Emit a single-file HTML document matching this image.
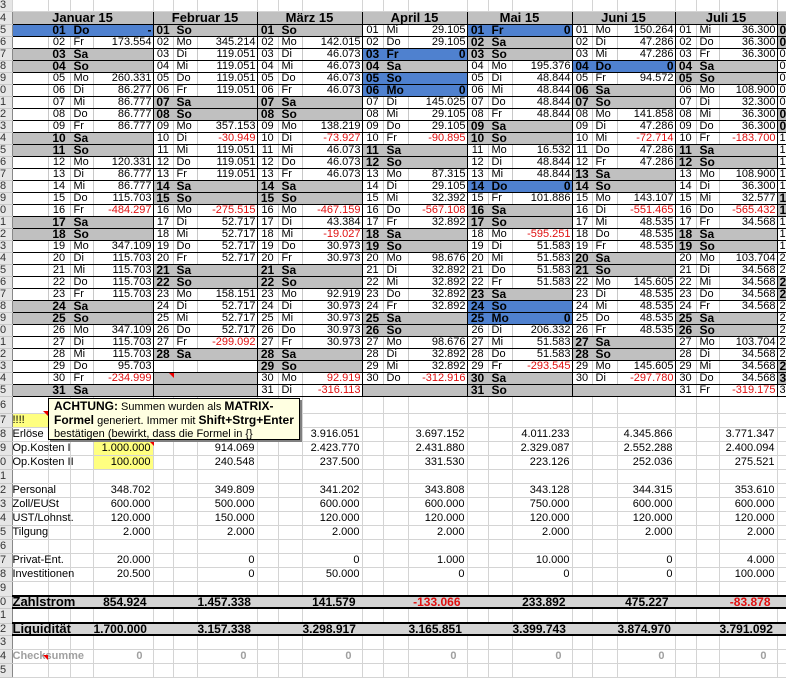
<!DOCTYPE html>
<html><head><meta charset="utf-8">
<style>
body{margin:0;width:786px;height:677px;overflow:hidden;background:#fff;font-family:"Liberation Sans",Arial,sans-serif;position:relative}
table{border-collapse:collapse;table-layout:fixed;width:786px;position:absolute;left:0;top:0}
td,th{padding:0;overflow:visible;white-space:nowrap;font-size:11px;color:#000}
th{background:#e6e6e6;font-weight:normal;text-align:left;color:#333;border-right:1px solid #888;border-bottom:1px solid #c8c8c8;font-size:11px;overflow:hidden}
tr.t td,tr.t th{height:11px;line-height:11px;border-right:1px solid #d4d4d4;border-bottom:1px solid #d4d4d4}
tr.h td,tr.h th{height:12px;line-height:12px}
tr.h td{background:#c0c0c0;border:1px solid #000;text-align:center;font-weight:bold;font-size:13px}
tr.u td,tr.u th{height:11px;line-height:11px}
tr.u td{border-bottom:1px solid #000;border-right:1px solid #c8c8c8}
tr.u td:nth-child(3n+3){text-align:center}
tr.u td:nth-child(3n+4){padding-left:3px}
tr.u td:nth-child(2){border-left:1px solid #000}
tr.u td.g{background:#c0c0c0;font-weight:bold;font-size:12px;border-right-color:#c0c0c0}
tr.u td.b{background:#4f81cf;font-weight:bold;font-size:12px;border-right-color:#4f81cf}
tr.u td:nth-child(3n+5){text-align:right;padding-right:1px;border-right:1px solid #000}
tr.u td:last-child{text-align:left;padding:0 0 0 2px;border-right:none}
.r{color:#e01010!important}
tr.l td,tr.l th{height:13px;line-height:13px}
tr.l.f td,tr.l.f th{height:16px}
tr.l td{border-right:1px solid #d4d4d4;border-bottom:1px solid #d4d4d4}
tr.l td.v{text-align:right;padding-right:2px}
tr.l td.y{background:#ffff80}
tr.z td,tr.z th{height:10px;line-height:10px}
tr.z td{background:#d4d4d4;border-top:2px solid #000;border-bottom:2px solid #000;font-weight:bold;font-size:12px}
tr.z td.v{text-align:right;padding-right:6px}
tr.c td{color:#a0a0a0;font-weight:bold}
tr.c td.v{padding-right:10px}
#tip{position:absolute;left:48px;top:398px;width:252px;height:42px;background:#ffffe1;border:1px solid #000;box-shadow:2px 2px 0 #808080;font-size:11px;line-height:13px;padding:1px 0 0 5px;box-sizing:border-box;overflow:hidden}
#tip b{font-size:12px}
.tri{position:absolute;width:0;height:0;border-top:5px solid #e00;border-left:5px solid transparent}
</style></head><body>
<table>
<colgroup><col style="width:12px"><col style="width:36px">
<col style="width:22px"><col style="width:23px"><col style="width:60px">
<col style="width:20px"><col style="width:24px"><col style="width:60px">
<col style="width:21px"><col style="width:24px"><col style="width:60px">
<col style="width:21px"><col style="width:25px"><col style="width:59px">
<col style="width:21px"><col style="width:24px"><col style="width:60px">
<col style="width:20px"><col style="width:25px"><col style="width:58px">
<col style="width:21px"><col style="width:23px"><col style="width:58px">
<col style="width:9px"></colgroup>
<tr class="t"><th>3</th><td></td><td></td><td></td><td></td><td></td><td></td><td></td><td></td><td></td><td></td><td></td><td></td><td></td><td></td><td></td><td></td><td></td><td></td><td></td><td></td><td></td><td></td><td></td></tr>
<tr class="h"><th>4</th><td colspan="4">Januar 15</td><td colspan="3">Februar 15</td><td colspan="3">März 15</td><td colspan="3">April 15</td><td colspan="3">Mai 15</td><td colspan="3">Juni 15</td><td colspan="3">Juli 15</td><td></td></tr>
<tr class="u"><th>5</th><td class="b"></td><td class="b">01</td><td class="b">Do</td><td class="b">-</td><td class="g">01</td><td class="g">So</td><td class="g"></td><td class="g">01</td><td class="g">So</td><td class="g"></td><td>01</td><td>Mi</td><td>29.105</td><td class="b">01</td><td class="b">Fr</td><td class="b">0</td><td>01</td><td>Mo</td><td>150.264</td><td>01</td><td>Mi</td><td>36.300</td><td class="g">0</td></tr>
<tr class="u"><th>6</th><td></td><td>02</td><td>Fr</td><td>173.554</td><td>02</td><td>Mo</td><td>345.214</td><td>02</td><td>Mo</td><td>142.015</td><td>02</td><td>Do</td><td>29.105</td><td class="g">02</td><td class="g">Sa</td><td class="g"></td><td>02</td><td>Di</td><td>47.286</td><td>02</td><td>Do</td><td>36.300</td><td class="g">0</td></tr>
<tr class="u"><th>7</th><td class="g"></td><td class="g">03</td><td class="g">Sa</td><td class="g"></td><td>03</td><td>Di</td><td>119.051</td><td>03</td><td>Di</td><td>46.073</td><td class="b">03</td><td class="b">Fr</td><td class="b">0</td><td class="g">03</td><td class="g">So</td><td class="g"></td><td>03</td><td>Mi</td><td>47.286</td><td>03</td><td>Fr</td><td>36.300</td><td>0</td></tr>
<tr class="u"><th>8</th><td class="g"></td><td class="g">04</td><td class="g">So</td><td class="g"></td><td>04</td><td>Mi</td><td>119.051</td><td>04</td><td>Mi</td><td>46.073</td><td class="g">04</td><td class="g">Sa</td><td class="g"></td><td>04</td><td>Mo</td><td>195.376</td><td class="b">04</td><td class="b">Do</td><td class="b">0</td><td class="g">04</td><td class="g">Sa</td><td class="g"></td><td>0</td></tr>
<tr class="u"><th>9</th><td></td><td>05</td><td>Mo</td><td>260.331</td><td>05</td><td>Do</td><td>119.051</td><td>05</td><td>Do</td><td>46.073</td><td class="b">05</td><td class="b">So</td><td class="b"></td><td>05</td><td>Di</td><td>48.844</td><td>05</td><td>Fr</td><td>94.572</td><td class="g">05</td><td class="g">So</td><td class="g"></td><td>0</td></tr>
<tr class="u"><th>0</th><td></td><td>06</td><td>Di</td><td>86.277</td><td>06</td><td>Fr</td><td>119.051</td><td>06</td><td>Fr</td><td>46.073</td><td class="b">06</td><td class="b">Mo</td><td class="b">0</td><td>06</td><td>Mi</td><td>48.844</td><td class="g">06</td><td class="g">Sa</td><td class="g"></td><td>06</td><td>Mo</td><td>108.900</td><td>0</td></tr>
<tr class="u"><th>1</th><td></td><td>07</td><td>Mi</td><td>86.777</td><td class="g">07</td><td class="g">Sa</td><td class="g"></td><td class="g">07</td><td class="g">Sa</td><td class="g"></td><td>07</td><td>Di</td><td>145.025</td><td>07</td><td>Do</td><td>48.844</td><td class="g">07</td><td class="g">So</td><td class="g"></td><td>07</td><td>Di</td><td>32.300</td><td>0</td></tr>
<tr class="u"><th>2</th><td></td><td>08</td><td>Do</td><td>86.777</td><td class="g">08</td><td class="g">So</td><td class="g"></td><td class="g">08</td><td class="g">So</td><td class="g"></td><td>08</td><td>Mi</td><td>29.105</td><td>08</td><td>Fr</td><td>48.844</td><td>08</td><td>Mo</td><td>141.858</td><td>08</td><td>Mi</td><td>36.300</td><td class="g">0</td></tr>
<tr class="u"><th>3</th><td></td><td>09</td><td>Fr</td><td>86.777</td><td>09</td><td>Mo</td><td>357.153</td><td>09</td><td>Mo</td><td>138.219</td><td>09</td><td>Do</td><td>29.105</td><td class="g">09</td><td class="g">Sa</td><td class="g"></td><td>09</td><td>Di</td><td>47.286</td><td>09</td><td>Do</td><td>36.300</td><td class="g">0</td></tr>
<tr class="u"><th>4</th><td class="g"></td><td class="g">10</td><td class="g">Sa</td><td class="g"></td><td>10</td><td>Di</td><td class="r">-30.949</td><td>10</td><td>Di</td><td class="r">-73.927</td><td>10</td><td>Fr</td><td class="r">-90.895</td><td class="g">10</td><td class="g">So</td><td class="g"></td><td>10</td><td>Mi</td><td class="r">-72.714</td><td>10</td><td>Fr</td><td class="r">-183.700</td><td>1</td></tr>
<tr class="u"><th>5</th><td class="g"></td><td class="g">11</td><td class="g">So</td><td class="g"></td><td>11</td><td>Mi</td><td>119.051</td><td>11</td><td>Mi</td><td>46.073</td><td class="g">11</td><td class="g">Sa</td><td class="g"></td><td>11</td><td>Mo</td><td>16.532</td><td>11</td><td>Do</td><td>47.286</td><td class="g">11</td><td class="g">Sa</td><td class="g"></td><td>1</td></tr>
<tr class="u"><th>6</th><td></td><td>12</td><td>Mo</td><td>120.331</td><td>12</td><td>Do</td><td>119.051</td><td>12</td><td>Do</td><td>46.073</td><td class="g">12</td><td class="g">So</td><td class="g"></td><td>12</td><td>Di</td><td>48.844</td><td>12</td><td>Fr</td><td>47.286</td><td class="g">12</td><td class="g">So</td><td class="g"></td><td>1</td></tr>
<tr class="u"><th>7</th><td></td><td>13</td><td>Di</td><td>86.777</td><td>13</td><td>Fr</td><td>119.051</td><td>13</td><td>Fr</td><td>46.073</td><td>13</td><td>Mo</td><td>87.315</td><td>13</td><td>Mi</td><td>48.844</td><td class="g">13</td><td class="g">Sa</td><td class="g"></td><td>13</td><td>Mo</td><td>108.900</td><td>1</td></tr>
<tr class="u"><th>8</th><td></td><td>14</td><td>Mi</td><td>86.777</td><td class="g">14</td><td class="g">Sa</td><td class="g"></td><td class="g">14</td><td class="g">Sa</td><td class="g"></td><td>14</td><td>Di</td><td>29.105</td><td class="b">14</td><td class="b">Do</td><td class="b">0</td><td class="g">14</td><td class="g">So</td><td class="g"></td><td>14</td><td>Di</td><td>36.300</td><td>1</td></tr>
<tr class="u"><th>9</th><td></td><td>15</td><td>Do</td><td>115.703</td><td class="g">15</td><td class="g">So</td><td class="g"></td><td class="g">15</td><td class="g">So</td><td class="g"></td><td>15</td><td>Mi</td><td>32.392</td><td>15</td><td>Fr</td><td>101.886</td><td>15</td><td>Mo</td><td>143.107</td><td>15</td><td>Mi</td><td>32.577</td><td class="g">1</td></tr>
<tr class="u"><th>0</th><td></td><td>16</td><td>Fr</td><td class="r">-484.297</td><td>16</td><td>Mo</td><td class="r">-275.515</td><td>16</td><td>Mo</td><td class="r">-467.159</td><td>16</td><td>Do</td><td class="r">-567.108</td><td class="g">16</td><td class="g">Sa</td><td class="g"></td><td>16</td><td>Di</td><td class="r">-551.465</td><td>16</td><td>Do</td><td class="r">-565.432</td><td class="g">1</td></tr>
<tr class="u"><th>1</th><td class="g"></td><td class="g">17</td><td class="g">Sa</td><td class="g"></td><td>17</td><td>Di</td><td>52.717</td><td>17</td><td>Di</td><td>43.384</td><td>17</td><td>Fr</td><td>32.892</td><td class="g">17</td><td class="g">So</td><td class="g"></td><td>17</td><td>Mi</td><td>48.535</td><td>17</td><td>Fr</td><td>34.568</td><td>1</td></tr>
<tr class="u"><th>2</th><td class="g"></td><td class="g">18</td><td class="g">So</td><td class="g"></td><td>18</td><td>Mi</td><td>52.717</td><td>18</td><td>Mi</td><td class="r">-19.027</td><td class="g">18</td><td class="g">Sa</td><td class="g"></td><td>18</td><td>Mo</td><td class="r">-595.251</td><td>18</td><td>Do</td><td>48.535</td><td class="g">18</td><td class="g">Sa</td><td class="g"></td><td>1</td></tr>
<tr class="u"><th>3</th><td></td><td>19</td><td>Mo</td><td>347.109</td><td>19</td><td>Do</td><td>52.717</td><td>19</td><td>Do</td><td>30.973</td><td class="g">19</td><td class="g">So</td><td class="g"></td><td>19</td><td>Di</td><td>51.583</td><td>19</td><td>Fr</td><td>48.535</td><td class="g">19</td><td class="g">So</td><td class="g"></td><td>1</td></tr>
<tr class="u"><th>4</th><td></td><td>20</td><td>Di</td><td>115.703</td><td>20</td><td>Fr</td><td>52.717</td><td>20</td><td>Fr</td><td>30.973</td><td>20</td><td>Mo</td><td>98.676</td><td>20</td><td>Mi</td><td>51.583</td><td class="g">20</td><td class="g">Sa</td><td class="g"></td><td>20</td><td>Mo</td><td>103.704</td><td>2</td></tr>
<tr class="u"><th>5</th><td></td><td>21</td><td>Mi</td><td>115.703</td><td class="g">21</td><td class="g">Sa</td><td class="g"></td><td class="g">21</td><td class="g">Sa</td><td class="g"></td><td>21</td><td>Di</td><td>32.892</td><td>21</td><td>Do</td><td>51.583</td><td class="g">21</td><td class="g">So</td><td class="g"></td><td>21</td><td>Di</td><td>34.568</td><td>2</td></tr>
<tr class="u"><th>6</th><td></td><td>22</td><td>Do</td><td>115.703</td><td class="g">22</td><td class="g">So</td><td class="g"></td><td class="g">22</td><td class="g">So</td><td class="g"></td><td>22</td><td>Mi</td><td>32.892</td><td>22</td><td>Fr</td><td>51.583</td><td>22</td><td>Mo</td><td>145.605</td><td>22</td><td>Mi</td><td>34.568</td><td class="g">2</td></tr>
<tr class="u"><th>7</th><td></td><td>23</td><td>Fr</td><td>115.703</td><td>23</td><td>Mo</td><td>158.151</td><td>23</td><td>Mo</td><td>92.919</td><td>23</td><td>Do</td><td>32.892</td><td class="g">23</td><td class="g">Sa</td><td class="g"></td><td>23</td><td>Di</td><td>48.535</td><td>23</td><td>Do</td><td>34.568</td><td class="g">2</td></tr>
<tr class="u"><th>8</th><td class="g"></td><td class="g">24</td><td class="g">Sa</td><td class="g"></td><td>24</td><td>Di</td><td>52.717</td><td>24</td><td>Di</td><td>30.973</td><td>24</td><td>Fr</td><td>32.892</td><td class="b">24</td><td class="b">So</td><td class="b"></td><td>24</td><td>Mi</td><td>48.535</td><td>24</td><td>Fr</td><td>34.568</td><td>2</td></tr>
<tr class="u"><th>9</th><td class="g"></td><td class="g">25</td><td class="g">So</td><td class="g"></td><td>25</td><td>Mi</td><td>52.717</td><td>25</td><td>Mi</td><td>30.973</td><td class="g">25</td><td class="g">Sa</td><td class="g"></td><td class="b">25</td><td class="b">Mo</td><td class="b">0</td><td>25</td><td>Do</td><td>48.535</td><td class="g">25</td><td class="g">Sa</td><td class="g"></td><td>2</td></tr>
<tr class="u"><th>0</th><td></td><td>26</td><td>Mo</td><td>347.109</td><td>26</td><td>Do</td><td>52.717</td><td>26</td><td>Do</td><td>30.973</td><td class="g">26</td><td class="g">So</td><td class="g"></td><td>26</td><td>Di</td><td>206.332</td><td>26</td><td>Fr</td><td>48.535</td><td class="g">26</td><td class="g">So</td><td class="g"></td><td>2</td></tr>
<tr class="u"><th>1</th><td></td><td>27</td><td>Di</td><td>115.703</td><td>27</td><td>Fr</td><td class="r">-299.092</td><td>27</td><td>Fr</td><td>30.973</td><td>27</td><td>Mo</td><td>98.676</td><td>27</td><td>Mi</td><td>51.583</td><td class="g">27</td><td class="g">Sa</td><td class="g"></td><td>27</td><td>Mo</td><td>103.704</td><td>2</td></tr>
<tr class="u"><th>2</th><td></td><td>28</td><td>Mi</td><td>115.703</td><td class="g">28</td><td class="g">Sa</td><td class="g"></td><td class="g">28</td><td class="g">Sa</td><td class="g"></td><td>28</td><td>Di</td><td>32.892</td><td>28</td><td>Do</td><td>51.583</td><td class="g">28</td><td class="g">So</td><td class="g"></td><td>28</td><td>Di</td><td>34.568</td><td>2</td></tr>
<tr class="u"><th>3</th><td></td><td>29</td><td>Do</td><td>95.703</td><td></td><td></td><td></td><td class="g">29</td><td class="g">So</td><td class="g"></td><td>29</td><td>Mi</td><td>32.892</td><td>29</td><td>Fr</td><td class="r">-293.545</td><td>29</td><td>Mo</td><td>145.605</td><td>29</td><td>Mi</td><td>34.568</td><td class="g">2</td></tr>
<tr class="u"><th>4</th><td></td><td>30</td><td>Fr</td><td class="r">-234.999</td><td class="g"></td><td class="g"></td><td class="g"></td><td>30</td><td>Mo</td><td class="r">92.919</td><td>30</td><td>Do</td><td class="r">-312.916</td><td class="g">30</td><td class="g">Sa</td><td class="g"></td><td>30</td><td>Di</td><td class="r">-297.780</td><td>30</td><td>Do</td><td>34.568</td><td class="g">3</td></tr>
<tr class="u"><th>5</th><td class="g"></td><td class="g">31</td><td class="g">Sa</td><td class="g"></td><td class="g"></td><td class="g"></td><td class="g"></td><td>31</td><td>Di</td><td class="r">-316.113</td><td class="g"></td><td class="g"></td><td class="g"></td><td class="g">31</td><td class="g">So</td><td class="g"></td><td class="g"></td><td class="g"></td><td class="g"></td><td>31</td><td>Fr</td><td class="r">-319.175</td><td>3</td></tr>
<tr class="l f"><th>6</th><td></td><td></td><td></td><td class="v"></td><td></td><td></td><td class="v"></td><td></td><td></td><td class="v"></td><td></td><td></td><td class="v"></td><td></td><td></td><td class="v"></td><td></td><td></td><td class="v"></td><td></td><td></td><td class="v"></td><td></td></tr>
<tr class="l"><th>7</th><td class="y">!!!!</td><td></td><td></td><td class="v"></td><td></td><td></td><td class="v"></td><td></td><td></td><td class="v"></td><td></td><td></td><td class="v"></td><td></td><td></td><td class="v"></td><td></td><td></td><td class="v"></td><td></td><td></td><td class="v"></td><td></td></tr>
<tr class="l"><th>8</th><td>Erlöse</td><td></td><td></td><td class="v"></td><td></td><td></td><td class="v"></td><td></td><td></td><td class="v">3.916.051</td><td></td><td></td><td class="v">3.697.152</td><td></td><td></td><td class="v">4.011.233</td><td></td><td></td><td class="v">4.345.866</td><td></td><td></td><td class="v">3.771.347</td><td></td></tr>
<tr class="l"><th>9</th><td>Op.Kosten I</td><td></td><td></td><td class="v y">1.000.000</td><td></td><td></td><td class="v">914.069</td><td></td><td></td><td class="v">2.423.770</td><td></td><td></td><td class="v">2.431.880</td><td></td><td></td><td class="v">2.329.087</td><td></td><td></td><td class="v">2.552.288</td><td></td><td></td><td class="v">2.400.094</td><td></td></tr>
<tr class="l"><th>0</th><td>Op.Kosten II</td><td></td><td></td><td class="v y">100.000</td><td></td><td></td><td class="v">240.548</td><td></td><td></td><td class="v">237.500</td><td></td><td></td><td class="v">331.530</td><td></td><td></td><td class="v">223.126</td><td></td><td></td><td class="v">252.036</td><td></td><td></td><td class="v">275.521</td><td></td></tr>
<tr class="l"><th>1</th><td></td><td></td><td></td><td class="v"></td><td></td><td></td><td class="v"></td><td></td><td></td><td class="v"></td><td></td><td></td><td class="v"></td><td></td><td></td><td class="v"></td><td></td><td></td><td class="v"></td><td></td><td></td><td class="v"></td><td></td></tr>
<tr class="l"><th>2</th><td>Personal</td><td></td><td></td><td class="v">348.702</td><td></td><td></td><td class="v">349.809</td><td></td><td></td><td class="v">341.202</td><td></td><td></td><td class="v">343.808</td><td></td><td></td><td class="v">343.128</td><td></td><td></td><td class="v">344.315</td><td></td><td></td><td class="v">353.610</td><td></td></tr>
<tr class="l"><th>3</th><td>Zoll/EUSt</td><td></td><td></td><td class="v">600.000</td><td></td><td></td><td class="v">500.000</td><td></td><td></td><td class="v">600.000</td><td></td><td></td><td class="v">600.000</td><td></td><td></td><td class="v">750.000</td><td></td><td></td><td class="v">600.000</td><td></td><td></td><td class="v">600.000</td><td></td></tr>
<tr class="l"><th>4</th><td>UST/Lohnst.</td><td></td><td></td><td class="v">120.000</td><td></td><td></td><td class="v">150.000</td><td></td><td></td><td class="v">120.000</td><td></td><td></td><td class="v">120.000</td><td></td><td></td><td class="v">120.000</td><td></td><td></td><td class="v">120.000</td><td></td><td></td><td class="v">120.000</td><td></td></tr>
<tr class="l"><th>5</th><td>Tilgung</td><td></td><td></td><td class="v">2.000</td><td></td><td></td><td class="v">2.000</td><td></td><td></td><td class="v">2.000</td><td></td><td></td><td class="v">2.000</td><td></td><td></td><td class="v">2.000</td><td></td><td></td><td class="v">2.000</td><td></td><td></td><td class="v">2.000</td><td></td></tr>
<tr class="l"><th>6</th><td></td><td></td><td></td><td class="v"></td><td></td><td></td><td class="v"></td><td></td><td></td><td class="v"></td><td></td><td></td><td class="v"></td><td></td><td></td><td class="v"></td><td></td><td></td><td class="v"></td><td></td><td></td><td class="v"></td><td></td></tr>
<tr class="l"><th>7</th><td>Privat-Ent.</td><td></td><td></td><td class="v">20.000</td><td></td><td></td><td class="v">0</td><td></td><td></td><td class="v">0</td><td></td><td></td><td class="v">1.000</td><td></td><td></td><td class="v">10.000</td><td></td><td></td><td class="v">0</td><td></td><td></td><td class="v">4.000</td><td></td></tr>
<tr class="l"><th>8</th><td>Investitionen</td><td></td><td></td><td class="v">20.500</td><td></td><td></td><td class="v">0</td><td></td><td></td><td class="v">50.000</td><td></td><td></td><td class="v">0</td><td></td><td></td><td class="v">0</td><td></td><td></td><td class="v">0</td><td></td><td></td><td class="v">100.000</td><td></td></tr>
<tr class="l"><th>9</th><td></td><td></td><td></td><td class="v"></td><td></td><td></td><td class="v"></td><td></td><td></td><td class="v"></td><td></td><td></td><td class="v"></td><td></td><td></td><td class="v"></td><td></td><td></td><td class="v"></td><td></td><td></td><td class="v"></td><td></td></tr>
<tr class="l z"><th>0</th><td style="font-size:13px">Zahlstrom</td><td></td><td></td><td class="v">854.924</td><td></td><td></td><td class="v">1.457.338</td><td></td><td></td><td class="v">141.579</td><td></td><td></td><td class="v r">-133.066</td><td></td><td></td><td class="v">233.892</td><td></td><td></td><td class="v">475.227</td><td></td><td></td><td class="v r">-83.878</td><td></td></tr>
<tr class="l"><th>1</th><td></td><td></td><td></td><td class="v"></td><td></td><td></td><td class="v"></td><td></td><td></td><td class="v"></td><td></td><td></td><td class="v"></td><td></td><td></td><td class="v"></td><td></td><td></td><td class="v"></td><td></td><td></td><td class="v"></td><td></td></tr>
<tr class="l z"><th>2</th><td style="font-size:13px">Liquidität</td><td></td><td></td><td class="v">1.700.000</td><td></td><td></td><td class="v">3.157.338</td><td></td><td></td><td class="v">3.298.917</td><td></td><td></td><td class="v">3.165.851</td><td></td><td></td><td class="v">3.399.743</td><td></td><td></td><td class="v">3.874.970</td><td></td><td></td><td class="v">3.791.092</td><td></td></tr>
<tr class="l"><th>3</th><td></td><td></td><td></td><td class="v"></td><td></td><td></td><td class="v"></td><td></td><td></td><td class="v"></td><td></td><td></td><td class="v"></td><td></td><td></td><td class="v"></td><td></td><td></td><td class="v"></td><td></td><td></td><td class="v"></td><td></td></tr>
<tr class="l c"><th>4</th><td>Checksumme</td><td></td><td></td><td class="v">0</td><td></td><td></td><td class="v">0</td><td></td><td></td><td class="v">0</td><td></td><td></td><td class="v">0</td><td></td><td></td><td class="v">0</td><td></td><td></td><td class="v">0</td><td></td><td></td><td class="v">0</td><td></td></tr>
<tr class="l"><th>5</th><td></td><td></td><td></td><td class="v"></td><td></td><td></td><td class="v"></td><td></td><td></td><td class="v"></td><td></td><td></td><td class="v"></td><td></td><td></td><td class="v"></td><td></td><td></td><td class="v"></td><td></td><td></td><td class="v"></td><td></td></tr>
</table>
<div class="tri" style="left:43px;top:411px"></div>
<div class="tri" style="left:149px;top:441px"></div>
<div class="tri" style="left:169px;top:373px"></div>
<div class="tri" style="left:43px;top:655px"></div>
<div id="tip"><b>ACHTUNG:</b> Summen wurden als <b>MATRIX-</b><br><b>Formel</b> generiert. Immer mit <b>Shift+Strg+Enter</b><br>bestätigen (bewirkt, dass die Formel in {} Klammern<br>gesetzt wird)</div>
</body></html>
